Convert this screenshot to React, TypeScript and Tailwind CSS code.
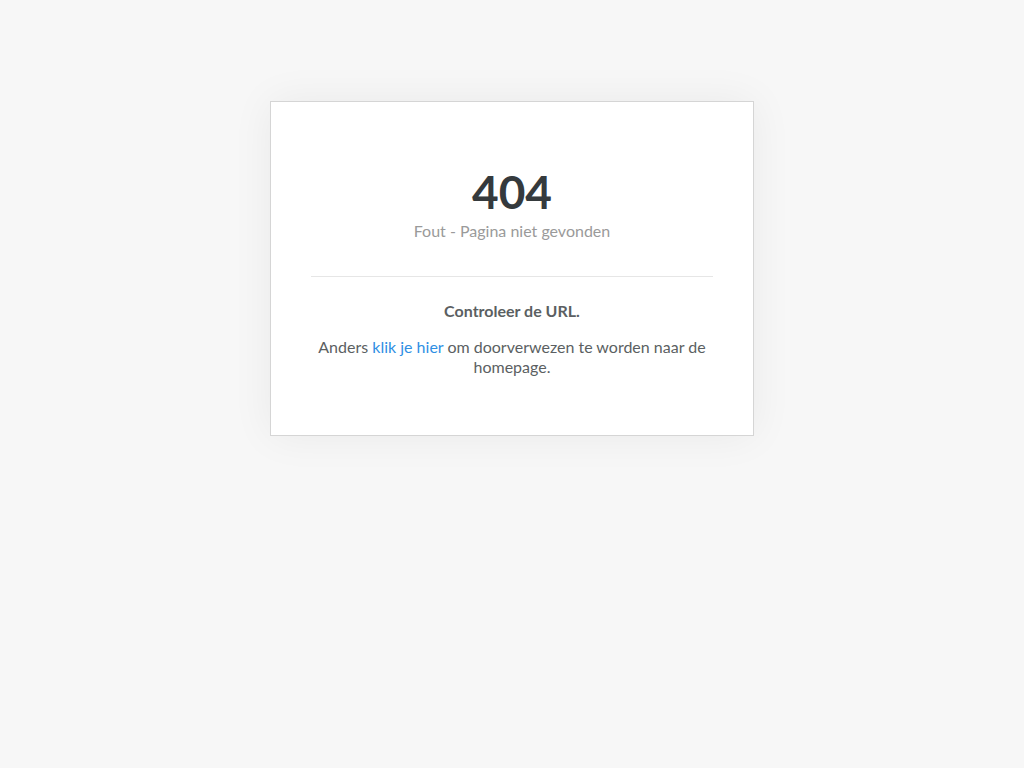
export default function App() {
  return (
    <div
      className="min-h-screen bg-[#f7f7f7] pt-[101px]"
      style={{ fontFamily: "Lato, 'Open Sans', Arial, sans-serif" }}
    >
      <div className="mx-auto w-[484px] border border-[#d5d5d5] bg-white px-10 pt-[64px] pb-[58px] text-center shadow-[0_0_40px_rgba(0,0,0,0.06)]">
        <h1 className="text-[46px] leading-[52px] font-bold text-[#353a3d]">404</h1>
        <p className="mt-[3px] text-[16px] leading-5 text-[#9a9a9a]">Fout - Pagina niet gevonden</p>

        <hr className="mt-[35px] border-t border-[#e6e6e6]" />

        <p className="mt-[24px] text-[16px] leading-5 font-bold text-[#5b5f62]">Controleer de URL.</p>
        <p className="mt-4 text-[16px] leading-5 text-[#5b5f62]">
          Anders{" "}
          <a href="#" className="text-[#2f8fe4]">
            klik je hier
          </a>{" "}
          om doorverwezen te worden naar de homepage.
        </p>
      </div>
    </div>
  );
}
